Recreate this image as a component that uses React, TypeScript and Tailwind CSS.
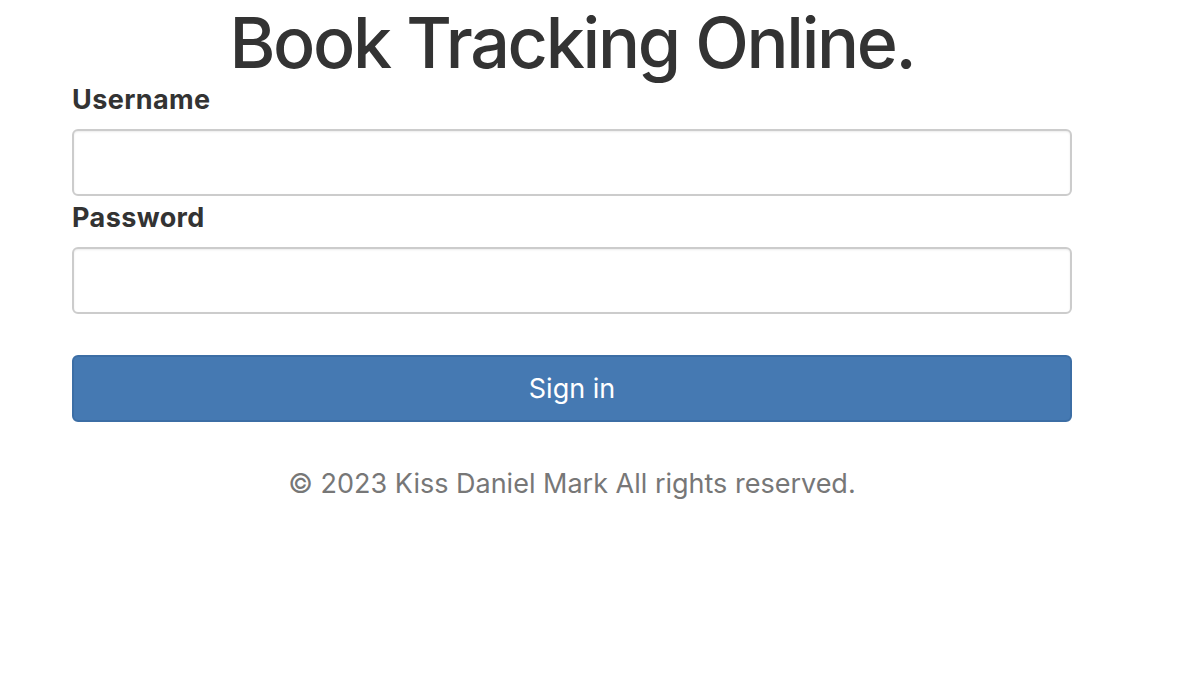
export default function App() {
  return (
    <main className="min-h-screen bg-white text-[#333]" style={{ fontFamily: 'Inter, "Noto Sans", sans-serif' }}>
      <div className="ml-[72px] w-[1000px] flex flex-col">
        <h1 className="mt-[4px] text-center text-[70px] leading-[1.1] font-medium tracking-[-2.3px]">
          Book Tracking Online.
        </h1>

        <label className="mt-[5px] text-[27px] leading-none font-bold tracking-[0.4px]">Username</label>
        <input
          type="text"
          className="mt-[16px] h-[67px] w-full rounded-[6px] border-2 border-[#ccc] shadow-[inset_0_1px_2px_rgba(0,0,0,0.08)] px-4 outline-none"
        />

        <label className="mt-[8px] text-[27px] leading-none font-bold tracking-[0.4px]">Password</label>
        <input
          type="password"
          className="mt-[16px] h-[67px] w-full rounded-[6px] border-2 border-[#ccc] shadow-[inset_0_1px_2px_rgba(0,0,0,0.08)] px-4 outline-none"
        />

        <button className="mt-[41px] h-[67px] w-full rounded-[6px] border-2 border-[#3c6ea5] bg-[#4579b2] text-white text-[27px] leading-none">
          Sign in
        </button>

        <footer className="mt-[48px] text-center text-[27px] leading-none text-[#777]">
          © 2023 Kiss Daniel Mark All rights reserved.
        </footer>
      </div>
    </main>
  )
}
